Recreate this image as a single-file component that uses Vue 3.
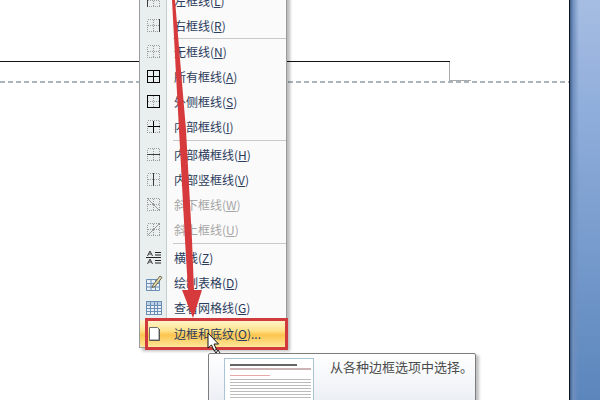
<script setup>
const frame = 'M1.5 1.5h12v12h-12z'
const mid = 'M7.5 1.5v12M1.5 7.5h12'
const items = [
  { label: '左框线', key: 'L', solid: 'M1.5 1v13' },
  { label: '右框线', key: 'R', solid: 'M13.5 1v13', after: 'thin' },
  { label: '无框线', key: 'N', solid: '' },
  { label: '所有框线', key: 'A', solid: frame + mid, dark: true, plain: true },
  { label: '外侧框线', key: 'S', solid: frame, dark: true },
  { label: '内部框线', key: 'I', solid: mid, dark: true, after: 'wide' },
  { label: '内部横框线', key: 'H', solid: 'M1 7.500h13' },
  { label: '内部竖框线', key: 'V', solid: 'M7.500 1v13' },
  { label: '斜下框线', key: 'W', solid: 'M1.500 1.500l12 12', off: true },
  { label: '斜上框线', key: 'U', solid: 'M1.500 13.500l12-12', off: true, after: 'wide' },
  { label: '横线', key: 'Z', kind: 'rule' },
  { label: '绘制表格', key: 'D', kind: 'draw' },
  { label: '查看网格线', key: 'G', kind: 'grid' },
  { label: '边框和底纹', key: 'O', kind: 'page', dots: '...', hot: true }
]
</script>

<template>
  <div class="screen">
    <main class="sheet">
      <div class="ruler-top"></div>
      <div class="ruler-tick"></div>
      <div class="ruler-foot"></div>
      <div class="page-break"></div>
    </main>
    <aside class="desk"></aside>

    <ul class="menu">
      <template v-for="item in items" :key="item.key">
        <li class="row" :class="{ off: item.off, hot: item.hot }">
          <span class="gutter">
            <svg v-if="item.solid !== undefined" class="icon" viewBox="0 0 15 15" shape-rendering="crispEdges">
              <path v-if="!item.plain" class="dots" d="M1.500 1.500h12v12h-12zM7.500 1.500v12M1.500 7.500h12" />
              <path v-if="item.solid" :class="item.dark ? 'ink-dark' : 'ink'" :d="item.solid" />
            </svg>
            <svg v-else-if="item.kind === 'rule'" class="icon" viewBox="0 0 15 15">
              <path class="rule" d="M0 7.500h15M9 2.500h6M9 5h6M9 10.500h6M9 13h6" />
              <path class="ink" d="M1.500 6L4 1l2.500 5M2.500 4h3M1.500 14L4 9l2.500 5M2.500 12h3" />
            </svg>
            <svg v-else-if="item.kind === 'draw'" class="icon big" viewBox="0 0 18 18">
              <path class="grid-fill" d="M1.500 5.500h13v11h-13z" />
              <path class="cell" d="M1.500 5.500h13v11h-13zM1.500 9.500h13M1.500 13h13M6 5.500v11M10.500 5.500v11" />
              <path class="pencil" d="M8 11l7-9 2 1.500-7 9-3 1z" />
            </svg>
            <svg v-else-if="item.kind === 'grid'" class="icon big" viewBox="0 0 18 18" shape-rendering="crispEdges">
              <path class="grid-fill" d="M1.500 2.500h15v13h-15z" />
              <path class="grid-head" d="M1.500 2.500h15v3h-15z" />
              <path class="cell" d="M1.500 2.500h15v13h-15zM1.500 6.500h15M1.500 9.500h15M1.500 12.500h15M5.500 2.500v13M9.500 2.500v13M12.500 2.500v13" />
            </svg>
            <svg v-else class="icon big" viewBox="0 0 18 18">
              <path class="sheet-icon" d="M4.500 2.500h8l1.500 1.500v11h-9.500z" />
              <path class="sheet-edge" d="M14.500 4v11.500h-10" />
            </svg>
          </span>
          <span class="label">{{ item.label }}(<u>{{ item.key }}</u>){{ item.dots }}</span>
        </li>
        <li v-if="item.after" class="sep" :class="item.after"></li>
      </template>
    </ul>

    <section class="tip">
      <div class="doc">
        <div class="doc-title"></div>
        <div class="doc-bar"></div>
        <div class="doc-head"></div>
        <div class="doc-lines"></div>
      </div>
      <p class="tip-text">从各种边框选项中选择。</p>
    </section>

    <svg class="overlay" viewBox="0 0 600 400">
      <path class="arrow" d="M172 0h3l11 130 6 110 2 50h8l-9 28-11-28h6l-3-50-6-110z" />
    </svg>

    <div class="callout"></div>

    <svg class="overlay" viewBox="0 0 600 400">
      <path class="cursor" d="M208 333v15l3.500-3 2.500 5.500 2.500-1-2.500-5.500h4.500z" />
      <path class="cursor" d="M214 350l2 3 2-3 2 3" />
    </svg>
  </div>
</template>

<style scoped>
.screen {
  position: relative;
  display: flex;
  width: 600px;
  height: 400px;
  overflow: hidden;
  background: #fff;
  font-family: "Noto Sans CJK SC", "Liberation Sans", sans-serif;
}
.sheet {
  width: 569px;
  flex: none;
  padding-top: 61px;
  background: #fff;
  border-right: 1px solid #10141c;
  box-sizing: content-box;
}
.ruler-top { width: 450px; height: 1px; background: #111; }
.ruler-tick { width: 1px; height: 18px; margin-left: 449px; background: #aaa; }
.ruler-foot { width: 22px; height: 1px; margin-left: 449px; background: #aaa; }
.page-break {
  height: 2px;
  background: repeating-linear-gradient(90deg, #a9b6bd 0 5px, transparent 5px 8px);
}
.desk {
  flex: 1;
  background: linear-gradient(90deg, #3f5f8c 0, #6f8fbe 3px, transparent 9px),
    linear-gradient(180deg, #a6bde2 0, #90aedb 110px, #5b86bc 400px);
}
.menu {
  position: absolute;
  left: 139px;
  top: -13px;
  width: 146px;
  margin: 0;
  padding: 0;
  list-style: none;
  background: linear-gradient(90deg, #e9eeee 0 26px, #c6cdcd 26px 27px, #fafafa 27px);
  border: 1px solid #9b9b9b;
  box-shadow: 3px 3px 3px rgba(0, 0, 0, 0.28);
}
.row {
  display: flex;
  align-items: center;
  height: 25px;
  font-size: 12px;
  line-height: 25px;
  color: #2c3c5c;
}
.row.off { color: #a6a6a6; }
.row.hot {
  height: 27px;
  background: linear-gradient(180deg, #fff6cf 0, #fee28a 40%, #fcc44e 55%, #fee79a 100%);
  border-radius: 2px;
}
.gutter {
  display: flex;
  align-items: center;
  justify-content: center;
  width: 27px;
  margin-right: 7px;
  flex: none;
}
.label { white-space: nowrap; }
.sep { height: 1px; margin-left: 33px; background: #c9c9c9; }
.sep.wide { margin-top: 1px; margin-bottom: 1px; }
.icon { width: 15px; height: 15px; }
.icon.big { width: 18px; height: 18px; }
.dots { fill: none; stroke: #9a9a9a; stroke-dasharray: 1 1; }
.ink { fill: none; stroke: #3c3c3c; }
.ink-dark { fill: none; stroke: #050505; }
.off .ink { stroke: #9a9a9a; }
.rule { fill: none; stroke: #222; }
.cell { fill: none; stroke: #6a8db5; }
.grid-fill { fill: #eaf1f8; }
.grid-head { fill: #bcd0e6; }
.pencil { fill: #e6d9a6; stroke: #6a6a55; }
.sheet-icon { fill: #fff; stroke: #6f6f6f; }
.sheet-edge { fill: none; stroke: #555; }
.tip {
  position: absolute;
  left: 208px;
  top: 353px;
  display: flex;
  width: 268px;
  height: 60px;
  box-sizing: border-box;
  padding: 4px 0 0 15px;
  background: linear-gradient(180deg, #fff 0, #e6ebf2 60px);
  border: 1px solid #7d7d7d;
  border-radius: 2px;
  box-shadow: 3px 2px 3px rgba(0, 0, 0, 0.25);
}
.doc {
  width: 90px;
  height: 60px;
  box-sizing: border-box;
  flex: none;
  padding: 5px 2px 0 5px;
  background: #fff;
  border: 1px solid #a9c3d6;
}
.doc-title { height: 2px; margin-right: 14px; background: #666; }
.doc-bar { height: 2px; margin-top: 2px; background: #cdb4b4; }
.doc-head { width: 40px; height: 1px; margin-top: 5px; background: #e8a8a8; }
.doc-lines {
  height: 24px;
  margin-top: 3px;
  background: repeating-linear-gradient(180deg, #bbb 0 1px, #fff 1px 3px);
}
.tip-text {
  margin: 0 0 0 16px;
  font-size: 13px;
  line-height: 18px;
  color: #4c4c4c;
  white-space: nowrap;
}
.callout {
  position: absolute;
  left: 145px;
  top: 318px;
  width: 143px;
  height: 32px;
  box-sizing: border-box;
  border: 3px solid #d03a3c;
}
.overlay {
  position: absolute;
  left: 0;
  top: 0;
  width: 600px;
  height: 400px;
  pointer-events: none;
}
.arrow { fill: #d63a3c; }
.cursor { fill: #fff; stroke: #111; stroke-width: 1; }
</style>
